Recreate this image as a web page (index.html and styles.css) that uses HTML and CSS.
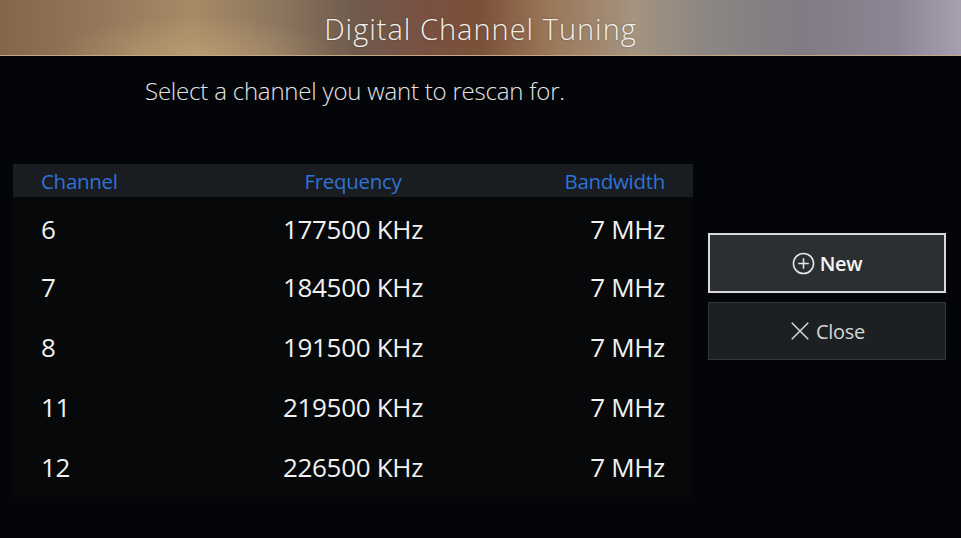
FILE: index.html
```html
<!DOCTYPE html>
<html>
<head>
<meta charset="utf-8">
<link rel="stylesheet" href="styles.css">
</head>
<body>
<div class="screen">
  <header class="title-bar">Digital Channel Tuning</header>
  <p class="subtitle">Select a channel you want to rescan for.</p>
  <div class="content">
    <section class="table">
      <div class="row head">
        <span class="c1">Channel</span><span class="c2">Frequency</span><span class="c3">Bandwidth</span>
      </div>
      <div class="body">
        <div class="row"><span class="c1">6</span><span class="c2">177500 KHz</span><span class="c3">7 MHz</span></div>
        <div class="row"><span class="c1">7</span><span class="c2">184500 KHz</span><span class="c3">7 MHz</span></div>
        <div class="row"><span class="c1">8</span><span class="c2">191500 KHz</span><span class="c3">7 MHz</span></div>
        <div class="row"><span class="c1">11</span><span class="c2">219500 KHz</span><span class="c3">7 MHz</span></div>
        <div class="row"><span class="c1">12</span><span class="c2">226500 KHz</span><span class="c3">7 MHz</span></div>
      </div>
    </section>
    <aside class="actions">
      <button class="btn focused">
        <svg class="icon" viewBox="0 0 24 24" width="23" height="23"><circle cx="12" cy="12" r="10.5" fill="none" stroke="#e6e6e6" stroke-width="1.6"/><path d="M12 6.5v11M6.5 12h11" stroke="#e6e6e6" stroke-width="1.6"/></svg>
        <span>New</span>
      </button>
      <button class="btn">
        <svg class="icon" viewBox="0 0 24 24" width="22" height="22"><path d="M3 3L21 21M21 3L3 21" stroke="#d8d8d8" stroke-width="1.6"/></svg>
        <span>Close</span>
      </button>
    </aside>
  </div>
</div>
</body>
</html>
```
FILE: styles.css
```css
html, body {
  margin: 0;
  padding: 0;
  background: #020407;
}
.screen {
  width: 961px;
  height: 538px;
  overflow: hidden;
  background: #030508;
  font-family: "Open Sans", "Noto Sans", sans-serif;
  color: #ececec;
  display: flex;
  flex-direction: column;
}
.title-bar {
  height: 56px;
  box-sizing: border-box;
  display: flex;
  align-items: center;
  justify-content: center;
  font-size: 29px;
  font-weight: 300;
  color: #f2efea;
  letter-spacing: 1px;
  padding-top: 1px;
  background:
    radial-gradient(ellipse 140px 40px at 195px 56px, rgba(200,170,120,0.55), rgba(200,170,120,0) 100%),
    linear-gradient(90deg, #86664a 0%, #94765a 10%, #a88a66 20%, #8c765f 29%, #6f5b4d 37%, #7a5040 45%, #7c5139 50%, #9a7658 57%, #a49480 66%, #8c8683 73%, #817b84 83%, #8b8494 93%, #a69fb0 100%);
  border-bottom: 1px solid #c4a886;
  text-shadow: 0 0 2px rgba(0,0,0,0.35);
}
.subtitle {
  margin: 20px 0 0 145px;
  font-size: 24px;
  font-weight: 300;
  color: #e4e4e4;
  letter-spacing: -0.2px;
  line-height: 30px;
}
.content {
  display: flex;
  align-items: flex-start;
  margin-top: 58px;
  padding-left: 13px;
  gap: 15px;
}
.table {
  width: 680px;
}
.row {
  display: flex;
  align-items: center;
  padding: 0 28px;
}
.row span { flex: 1; white-space: nowrap; }
.row .c1 { text-align: left; }
.row .c2 { text-align: center; }
.row .c3 { text-align: right; }
.head {
  height: 33px;
  background: #191c20;
  color: #2f72d6;
  font-size: 20.5px;
  font-weight: 400;
  letter-spacing: -0.3px;
  padding-top: 1px;
  box-sizing: border-box;
}
.body {
  background: #06080a;
}
.body .row {
  height: 60px;
  font-size: 26px;
  color: #f1f1f1;
  letter-spacing: -0.3px;
}
.body .row:first-child { padding-top: 3px; box-sizing: border-box; }
.actions {
  width: 238px;
  margin-top: 69px;
  display: flex;
  flex-direction: column;
  gap: 9px;
}
.btn {
  height: 58px;
  display: flex;
  align-items: center;
  justify-content: center;
  gap: 5px;
  background: #1d2022;
  border: 1px solid #34383b;
  color: #d6d6d6;
  font-family: "Open Sans", "Noto Sans", sans-serif;
  font-size: 20px;
  font-weight: 400;
  letter-spacing: -0.3px;
  padding: 0;
}
.btn.focused {
  height: 60px;
  background: #2c2f31;
  border: 2px solid #d9d9d9;
  color: #f4f4f4;
  font-weight: 600;
}
.icon { display: block; }
```
